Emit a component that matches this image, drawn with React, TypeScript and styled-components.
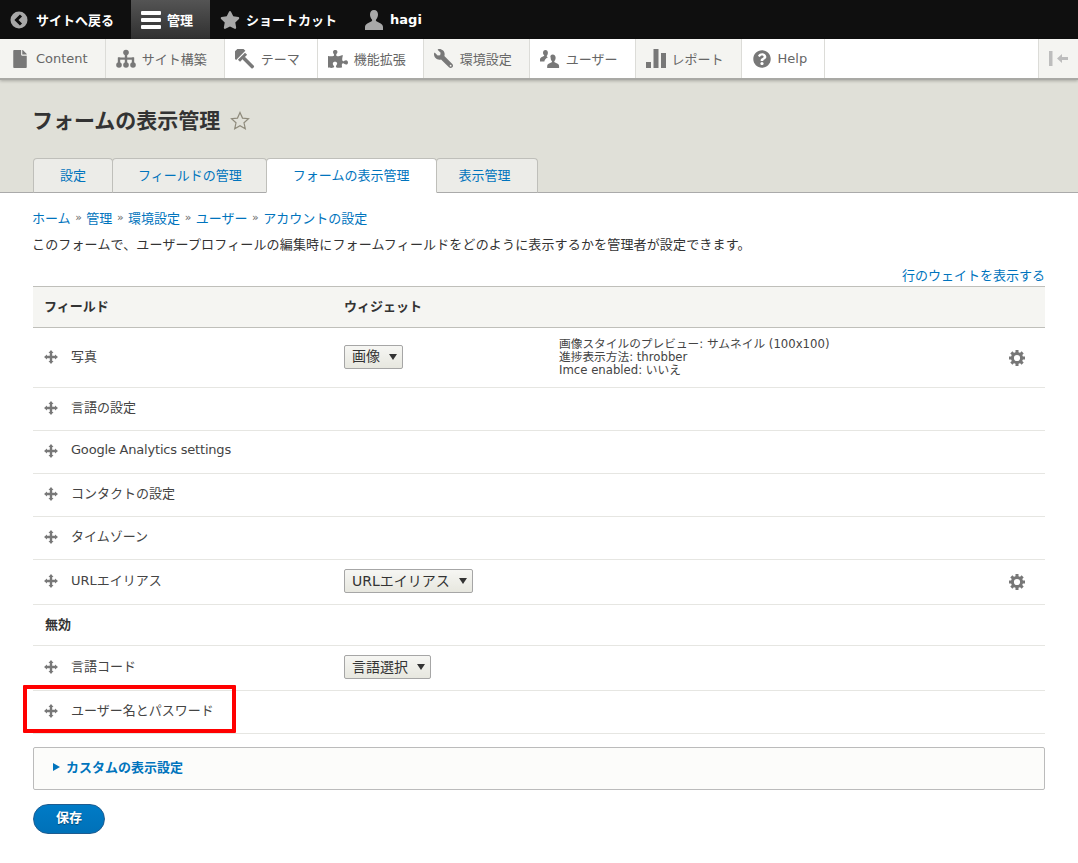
import React from "react";
import styled, { createGlobalStyle } from "styled-components";
import { FaPuzzlePiece, FaWrench, FaFile, FaQuestionCircle, FaStar } from "react-icons/fa";

const GlobalStyle = createGlobalStyle`
  html, body { margin: 0; padding: 0; background: #fff; }
  body {
    font-family: "DejaVu Sans", "Noto Sans CJK JP", sans-serif;
    font-size: 13px;
    color: #333;
  }
  a { color: #0074bd; text-decoration: none; }
`;

const Page = styled.div`
  width: 1078px;
  height: 863px;
  overflow: hidden;
`;

const TopBar = styled.div`
  display: flex;
  height: 39px;
  background: #0f0f0f;
`;

const TopItem = styled.a<{ $active?: boolean }>`
  display: flex;
  align-items: center;
  gap: 6px;
  padding: 0 17px 0 10px;
  color: #fff;
  font-weight: 700;
  font-size: 13px;
  background: ${(p) => (p.$active ? "linear-gradient(#545454, #303030)" : "transparent")};
`;

const TopIcon = styled.span`
  display: flex;
  width: 20px;
  color: #a8a8a8;
`;

const MenuBar = styled.div`
  position: relative;
  display: flex;
  height: 39px;
  background: #fff;
  border-bottom: 2px solid #a9a9a5;
  box-shadow: 0 1px 3px rgba(0, 0, 0, 0.25);
`;

const MenuItem = styled.a<{ $shade?: boolean }>`
  display: flex;
  align-items: center;
  gap: 6px;
  padding: 0 17px 0 10px;
  color: #666;
  font-size: 13px;
  background: ${(p) => (p.$shade ? "#f4f4f1" : "#fff")};
  border-right: 1px solid #dcdcd8;
`;

const MenuIcon = styled.span`
  display: flex;
  justify-content: center;
  width: 20px;
  color: #787878;
`;

const MirroredIcon = styled.span`
  display: flex;
  transform: scaleX(-1);
`;

const PushLeft = styled.a`
  display: flex;
  align-items: center;
  justify-content: center;
  width: 39px;
  margin-left: auto;
  background: #f4f4f1;
  border-left: 1px solid #dcdcd8;
  color: #bdbdbd;
`;

const Head = styled.div`
  height: 112px;
  background: #e0e0d8;
  border-bottom: 1px solid #aaa;
  display: flex;
  flex-direction: column;
  justify-content: flex-end;
  padding-left: 33px;
`;

const TitleRow = styled.div`
  display: flex;
  align-items: center;
  gap: 10px;
  margin-bottom: 21px;
`;

const Title = styled.h1`
  margin: 0 0 0 -1px;
  font-size: 21px;
  line-height: 32px;
  font-weight: 700;
  color: #333;
`;

const Tabs = styled.div`
  display: flex;
  height: 35px;
  margin-bottom: -1px;
`;

const Tab = styled.a<{ $active?: boolean; $left: number; $right: number }>`
  display: flex;
  align-items: center;
  padding: 0 ${(p) => p.$right}px 3px ${(p) => p.$left}px;
  font-size: 13px;
  color: #0074bd;
  background: ${(p) => (p.$active ? "#fff" : "#ecece8")};
  border: 1px solid #bfbfba;
  border-bottom: ${(p) => (p.$active ? "1px solid #fff" : "1px solid #aaa")};
  margin-right: -1px;
  border-radius: 4px 4px 0 0;
  position: relative;
  z-index: ${(p) => (p.$active ? 1 : 0)};
`;

const Content = styled.div`
  padding: 15px 33px 0;
`;

const Breadcrumb = styled.div`
  display: flex;
  align-items: center;
  margin-left: -1px;
  height: 18px;
  gap: 4px;
`;

const Sep = styled.span`
  color: #666;
  font-size: 11px;
  margin: 0 0.5px;
`;

const Description = styled.p`
  margin: 10px 0 0 -1px;
  height: 18px;
  line-height: 18px;
  letter-spacing: 0.012em;
`;

const WeightToggle = styled.div`
  margin-top: 13px;
  height: 18px;
  line-height: 18px;
  text-align: right;
`;

const Table = styled.table`
  width: 1012px;
  margin-top: 1px;
  border-collapse: collapse;
  table-layout: fixed;
`;

const HeadCell = styled.th`
  height: 37px;
  padding: 0 12px 3px 11px;
  background: #f5f5f2;
  border-top: 1px solid #bfbfba;
  border-bottom: 1px solid #bfbfba;
  text-align: left;
  font-size: 13px;
  font-weight: 700;
  color: #333;
`;

const Row = styled.tr<{ $h: number }>`
  height: ${(p) => p.$h}px;
  border-bottom: 1px solid #e6e6e2;
`;

const Cell = styled.td`
  position: relative;
  padding: 0 11px;
  font-size: 13px;
  color: #444;
  vertical-align: middle;
`;

const RegionCell = styled(Cell)`
  font-weight: 700;
  font-size: 13px;
  color: #333;
  padding: 0 12px 4px;
`;

const FieldName = styled.div<{ $tight?: boolean }>`
  display: flex;
  align-items: center;
  gap: 13px;
  padding-bottom: 5px;
  letter-spacing: ${(p) => (p.$tight ? "-0.2px" : "0")};
`;

const DragIcon = styled.svg`
  flex: none;
  margin-top: 3px;
`;

const SelectBox = styled.div`
  display: inline-flex;
  align-items: center;
  gap: 9px;
  box-sizing: border-box;
  height: 24px;
  margin-bottom: 2px;
  padding: 0 5px 3px 7px;
  vertical-align: middle;
  font-size: 14px;
  color: #333;
  background: linear-gradient(#f6f6f3, #e7e7df);
  border: 1px solid #a6a6a6;
  border-radius: 2px;
  &::after {
    content: "";
    margin-top: 3px;
    border-style: solid;
    border-width: 6px 4.5px 0;
    border-color: #333 transparent transparent;
  }
`;

const Summary = styled.div`
  font-size: 11.7px;
  line-height: 13px;
  color: #444;
  padding-left: 1px;
`;

const GearWrap = styled.div`
  display: flex;
  justify-content: center;
  padding-right: 6px;
  color: #777;
`;

const Highlight = styled.div`
  position: absolute;
  left: -10px;
  top: -6px;
  width: 205px;
  height: 40px;
  border: 4px solid #f00;
  border-radius: 1px;
`;

const Details = styled.div`
  display: flex;
  align-items: center;
  gap: 6px;
  height: 36px;
  margin-top: 13px;
  padding: 0 0 5px 19px;
  background: #fcfcfa;
  border: 1px solid #bbb;
  border-radius: 2px;
  color: #0074bd;
  font-weight: 700;
  font-size: 13px;
  &::before {
    content: "";
    margin-top: 2px;
    border-style: solid;
    border-width: 4px 0 4px 7px;
    border-color: transparent transparent transparent #0074bd;
  }
`;

const SaveButton = styled.button`
  display: block;
  width: 72px;
  height: 30px;
  margin-top: 14px;
  padding: 0 0 6px;
  font-family: inherit;
  font-size: 13px;
  font-weight: 700;
  color: #fff;
  background: linear-gradient(#007bc6, #0071b8);
  border: 1px solid #1e5c90;
  border-radius: 20px;
  text-shadow: 0 1px 1px rgba(0, 0, 0, 0.4);
`;

const BackIcon = () => (
  <svg width="18" height="18" viewBox="0 0 18 18">
    <circle cx="9" cy="9" r="8.5" fill="currentColor" />
    <path d="M11 4.500 6.500 9l4.500 4.500" fill="none" stroke="#0f0f0f" strokeWidth="3" />
  </svg>
);

const BarsIcon = () => (
  <svg width="20" height="20" viewBox="0 0 20 20" fill="#fff">
    <rect y="1" width="20" height="4" rx="1" />
    <rect y="8" width="20" height="4" rx="1" />
    <rect y="15" width="20" height="4" rx="1" />
  </svg>
);

const PersonIcon = () => (
  <svg width="20" height="20" viewBox="0 0 20 20" fill="currentColor">
    <path d="M10 0c2.600 0 4 2 4 4.600 0 2-.8 3.800-1.900 5-.4.500-.3 1.300.3 1.600l4.300 2.200c1.400.7 2.300 2.200 2.300 3.700V20H1v-2.900c0-1.500.9-3 2.300-3.700l4.300-2.200c.6-.3.7-1.100.3-1.600C6.800 8.400 6 6.600 6 4.600 6 2 7.400 0 10 0z" />
  </svg>
);

const SitemapIcon = () => (
  <svg width="20" height="20" viewBox="0 0 20 20" fill="currentColor">
    <circle cx="10" cy="3.500" r="2.800" />
    <rect x="8.800" y="4" width="2.400" height="11" />
    <rect x="2" y="8.500" width="16" height="2.200" />
    <rect x="1.800" y="8.500" width="2.400" height="7" />
    <rect x="15.800" y="8.500" width="2.400" height="7" />
    <circle cx="3" cy="16" r="2.800" />
    <circle cx="10" cy="16" r="2.800" />
    <circle cx="17" cy="16" r="2.800" />
  </svg>
);

const HammerIcon = () => (
  <svg width="20" height="20" viewBox="0 0 20 20" fill="currentColor">
    <g transform="rotate(-45 10 10)">
      <rect x="3" y="-2.500" width="13" height="7" />
      <rect x="4.500" y="5.500" width="10" height="3" />
      <rect x="8" y="8" width="3.500" height="14" rx="1" />
    </g>
  </svg>
);

const PeopleIcon = () => (
  <svg width="22" height="20" viewBox="0 0 22 20" fill="currentColor">
    <path d="M6 0c1.700 0 2.700 1.400 2.700 3.200 0 1.300-.5 2.500-1.200 3.300-.3.400-.2.800.2 1l1 .6c-.9.500-2 1.200-2.800 2.100-.6.700-1 1.500-1.100 2.500H0v-2.200c0-1 .6-1.900 1.500-2.400l2.800-1.400c.4-.2.500-.7.200-1C3.800 5.700 3.300 4.500 3.300 3.200 3.300 1.400 4.300 0 6 0z" />
    <path d="M14 5c2 0 3.200 1.600 3.200 3.700 0 1.500-.6 2.900-1.400 3.800-.3.400-.2.900.2 1.100l3.400 1.700c1.100.6 1.600 1.600 1.600 2.700v2H7.900v-2c0-1.100.5-2.100 1.600-2.700l3.400-1.700c.4-.2.500-.7.200-1.100-.8-.9-1.400-2.300-1.400-3.800C10.800 6.600 12 5 14 5z" />
  </svg>
);

const ReportIcon = () => (
  <svg width="20" height="19" viewBox="0 0 20 19" fill="currentColor">
    <rect y="13" width="5" height="6" />
    <rect x="7.500" width="5" height="19" />
    <rect x="15" y="4" width="5" height="15" />
  </svg>
);

const PushIcon = () => (
  <svg width="19" height="15" viewBox="0 0 19 15" fill="currentColor">
    <rect width="3.500" height="15" />
    <path d="M8 7.500 13 3v3h6v3h-6v3z" />
  </svg>
);

const StarOutline = () => (
  <svg width="20" height="20" viewBox="0 0 20 20">
    <path
      d="M10 1.500l2.500 5.600 6 .6-4.500 4.100 1.300 6L10 14.700 4.700 17.800 6 11.800 1.500 7.700l6-.6z"
      fill="none"
      stroke="#8f8b7c"
      strokeWidth="1.200"
    />
  </svg>
);

const GearIcon = () => (
  <svg width="16" height="16" viewBox="0 0 16 16" fill="currentColor">
    <circle cx="8" cy="8" r="4.600" fill="none" stroke="currentColor" strokeWidth="3" />
    {[0, 45, 90, 135, 180, 225, 270, 315].map((a) => (
      <rect key={a} x="6.500" y="0" width="3" height="3.500" transform={`rotate(${a} 8 8)`} />
    ))}
  </svg>
);

const Drag = () => (
  <DragIcon width="14" height="14" viewBox="0 0 14 14" fill="#787878">
    <path d="M7 0 9.500 3H8.200v2.800H11V4.500L14 7l-3 2.500V8.200H8.200V11h1.300L7 14l-2.500-3h1.300V8.200H3v1.300L0 7l3-2.500v1.300h2.800V3H4.500z" />
  </DragIcon>
);

const menu = [
  { label: "Content", icon: <FaFile size={18} />, shade: true },
  { label: "サイト構築", icon: <SitemapIcon />, shade: true },
  { label: "テーマ", icon: <HammerIcon /> },
  { label: "機能拡張", icon: <FaPuzzlePiece size={20} /> },
  {
    label: "環境設定",
    icon: (
      <MirroredIcon>
        <FaWrench size={19} />
      </MirroredIcon>
    ),
    shade: true,
  },
  { label: "ユーザー", icon: <PeopleIcon /> },
  { label: "レポート", icon: <ReportIcon />, shade: true },
  { label: "Help", icon: <FaQuestionCircle size={18} /> },
];

const tabs = [
  { label: "設定", left: 26, right: 26 },
  { label: "フィールドの管理", left: 25, right: 24 },
  { label: "フォームの表示管理", left: 26, right: 27, active: true },
  { label: "表示管理", left: 21, right: 27 },
];

const crumbs = ["ホーム", "管理", "環境設定", "ユーザー", "アカウントの設定"];

const FieldRow: React.FC<{
  name: string;
  h: number;
  select?: string;
  summary?: string[];
  gear?: boolean;
  marked?: boolean;
  tight?: boolean;
}> = ({ name, h, select, summary, gear, marked, tight }) => (
  <Row $h={h}>
    <Cell>
      {marked && <Highlight />}
      <FieldName $tight={tight}>
        <Drag />
        {name}
      </FieldName>
    </Cell>
    <Cell>{select && <SelectBox>{select}</SelectBox>}</Cell>
    <Cell>
      {summary && (
        <Summary>
          {summary.map((line) => (
            <div key={line}>{line}</div>
          ))}
        </Summary>
      )}
    </Cell>
    <Cell>
      {gear && (
        <GearWrap>
          <GearIcon />
        </GearWrap>
      )}
    </Cell>
  </Row>
);

export default function App() {
  return (
    <Page>
      <GlobalStyle />
      <TopBar>
        <TopItem>
          <TopIcon>
            <BackIcon />
          </TopIcon>
          サイトへ戻る
        </TopItem>
        <TopItem $active>
          <BarsIcon />
          管理
        </TopItem>
        <TopItem>
          <TopIcon>
            <FaStar size={20} />
          </TopIcon>
          ショートカット
        </TopItem>
        <TopItem>
          <TopIcon>
            <PersonIcon />
          </TopIcon>
          hagi
        </TopItem>
      </TopBar>
      <MenuBar>
        {menu.map((m) => (
          <MenuItem key={m.label} $shade={m.shade}>
            <MenuIcon>{m.icon}</MenuIcon>
            {m.label}
          </MenuItem>
        ))}
        <PushLeft>
          <PushIcon />
        </PushLeft>
      </MenuBar>
      <Head>
        <TitleRow>
          <Title>フォームの表示管理</Title>
          <StarOutline />
        </TitleRow>
        <Tabs>
          {tabs.map((t) => (
            <Tab key={t.label} $active={t.active} $left={t.left} $right={t.right}>
              {t.label}
            </Tab>
          ))}
        </Tabs>
      </Head>
      <Content>
        <Breadcrumb>
          {crumbs.map((c, i) => (
            <React.Fragment key={c}>
              {i > 0 && <Sep>»</Sep>}
              <a>{c}</a>
            </React.Fragment>
          ))}
        </Breadcrumb>
        <Description>このフォームで、ユーザープロフィールの編集時にフォームフィールドをどのように表示するかを管理者が設定できます。</Description>
        <WeightToggle>
          <a>行のウェイトを表示する</a>
        </WeightToggle>
        <Table>
          <colgroup>
            <col width="300" />
            <col width="214" />
            <col width="448" />
            <col width="50" />
          </colgroup>
          <thead>
            <tr>
              <HeadCell>フィールド</HeadCell>
              <HeadCell>ウィジェット</HeadCell>
              <HeadCell />
              <HeadCell />
            </tr>
          </thead>
          <tbody>
            <FieldRow
              name="写真"
              h={60}
              select="画像"
              gear
              summary={[
                "画像スタイルのプレビュー: サムネイル (100x100)",
                "進捗表示方法: throbber",
                "Imce enabled: いいえ",
              ]}
            />
            <FieldRow name="言語の設定" h={43} />
            <FieldRow name="Google Analytics settings" h={43} tight />
            <FieldRow name="コンタクトの設定" h={43} />
            <FieldRow name="タイムゾーン" h={43} />
            <FieldRow name="URLエイリアス" h={45} select="URLエイリアス" gear />
            <Row $h={41}>
              <RegionCell colSpan={4}>無効</RegionCell>
            </Row>
            <FieldRow name="言語コード" h={45} select="言語選択" />
            <FieldRow name="ユーザー名とパスワード" h={43} marked />
          </tbody>
        </Table>
        <Details>カスタムの表示設定</Details>
        <SaveButton>保存</SaveButton>
      </Content>
    </Page>
  );
}
